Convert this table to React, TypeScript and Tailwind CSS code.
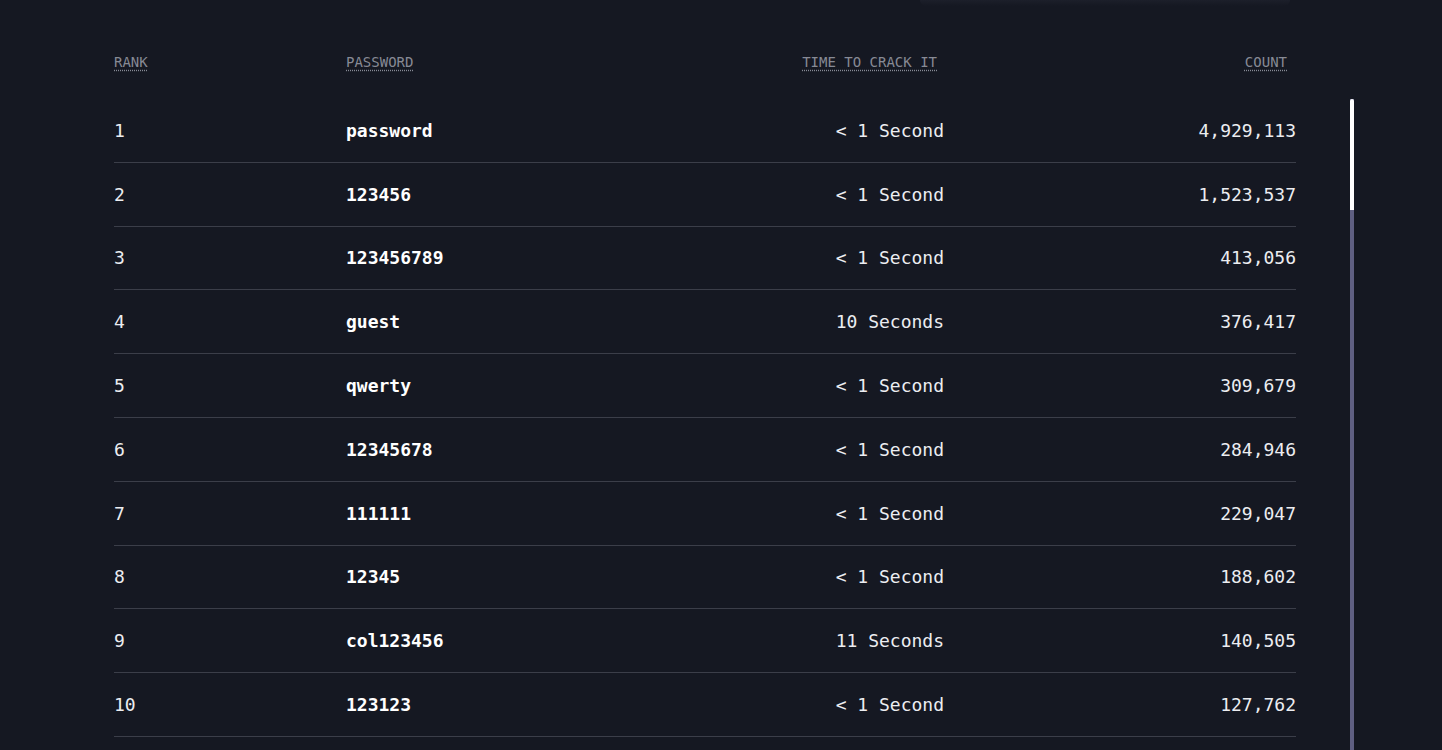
const rows = [
  { rank: 1, password: "password", time: "< 1 Second", count: "4,929,113" },
  { rank: 2, password: "123456", time: "< 1 Second", count: "1,523,537" },
  { rank: 3, password: "123456789", time: "< 1 Second", count: "413,056" },
  { rank: 4, password: "guest", time: "10 Seconds", count: "376,417" },
  { rank: 5, password: "qwerty", time: "< 1 Second", count: "309,679" },
  { rank: 6, password: "12345678", time: "< 1 Second", count: "284,946" },
  { rank: 7, password: "111111", time: "< 1 Second", count: "229,047" },
  { rank: 8, password: "12345", time: "< 1 Second", count: "188,602" },
  { rank: 9, password: "col123456", time: "11 Seconds", count: "140,505" },
  { rank: 10, password: "123123", time: "< 1 Second", count: "127,762" },
];

const mono = { fontFamily: '"DejaVu Sans Mono", "Liberation Mono", monospace' };

const App = () => {
  return (
    <div
      className="relative w-full h-[750px] overflow-hidden bg-[#151822] text-[#ecedf1]"
      style={mono}
    >
      {/* faint glow from the section above */}
      <div className="absolute top-0 left-[920px] w-[370px] h-[6px] bg-gradient-to-b from-[#1c1f2a] to-transparent rounded-b-full" />

      <div className="pl-[114px] pt-[52px]">
        <div className="w-[1182px]">
          <div className="grid grid-cols-[232px_454px_144px_352px] h-[47px] text-[14px] text-[#878a95]">
            <div>
              <span className="underline decoration-dotted underline-offset-[3px]">RANK</span>
            </div>
            <div>
              <span className="underline decoration-dotted underline-offset-[3px]">PASSWORD</span>
            </div>
            <div className="text-right pr-[7px]">
              <span className="underline decoration-dotted underline-offset-[3px] whitespace-nowrap">
                TIME TO CRACK IT
              </span>
            </div>
            <div className="text-right pr-[9px]">
              <span className="underline decoration-dotted underline-offset-[3px]">COUNT</span>
            </div>
          </div>

          {rows.map((r) => (
            <div
              key={r.rank}
              className="grid grid-cols-[232px_454px_144px_352px] items-center h-[63.8px] border-b border-[#3b3e49] text-[18px]"
            >
              <div>{r.rank}</div>
              <div className="font-bold text-white">{r.password}</div>
              <div className="text-right whitespace-nowrap">{r.time}</div>
              <div className="text-right">{r.count}</div>
            </div>
          ))}
        </div>
      </div>

      {/* custom scrollbar */}
      <div className="absolute left-[1350px] top-[99px] bottom-0 w-[4px] bg-[#5f5f82]">
        <div className="h-[111px] w-full bg-white rounded-t-full" />
      </div>
    </div>
  );
};

export default App;
